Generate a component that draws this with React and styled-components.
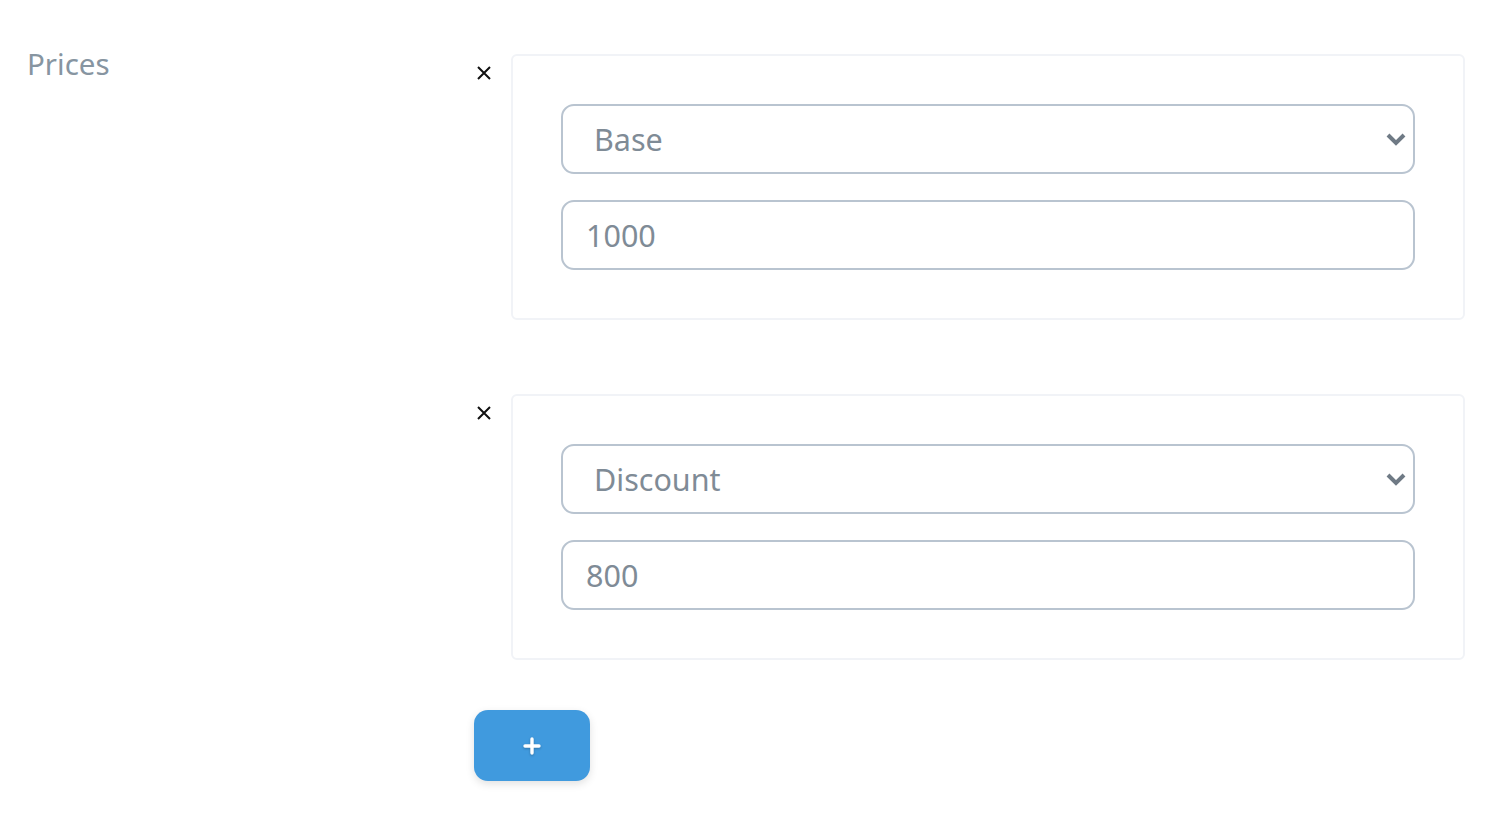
import React from 'react'
import styled, { createGlobalStyle } from 'styled-components'

const GlobalStyle = createGlobalStyle`
  html, body {
    margin: 0;
    padding: 0;
    background: #fff;
  }
  body {
    font-family: "Noto Sans", Lato, "Liberation Sans", sans-serif;
  }
`

const Page = styled.div`
  display: grid;
  grid-template-columns: 447px 1fr;
  padding: 46px 29px 40px 27px;
`

const Label = styled.div`
  font-size: 29.5px;
  color: #8795a1;
  line-height: 1;
  margin-top: 3px;
`

const Fields = styled.div`
  display: flex;
  flex-direction: column;
  margin-top: 8px;
`

const PriceRow = styled.div`
  display: flex;
  align-items: flex-start;
  & + & {
    margin-top: 74px;
  }
`

const Remove = styled.button`
  width: 37px;
  flex: none;
  padding: 11px 0 0 2px;
  margin: 0;
  border: none;
  background: none;
  display: flex;
  cursor: pointer;
`

const Card = styled.div`
  flex: 1;
  border: 2px solid #f1f3f7;
  border-radius: 6px;
  padding: 48px;
  display: flex;
  flex-direction: column;
  gap: 26px;
`

const SelectWrap = styled.div`
  position: relative;
`

const fieldCss = `
  width: 100%;
  box-sizing: border-box;
  height: 70px;
  border: 2px solid #b9c4d0;
  border-radius: 13px;
  background: #fff;
  font-family: inherit;
  font-size: 30.5px;
  color: #7f8b96;
  outline: none;
`

const Select = styled.select`
  ${fieldCss}
  appearance: none;
  padding: 0 60px 0 31px;
`

const Chevron = styled.svg`
  position: absolute;
  right: 7px;
  top: 50%;
  transform: translateY(-50%);
  pointer-events: none;
`

const Input = styled.input`
  ${fieldCss}
  padding: 0 23px;
`

const AddButton = styled.button`
  margin-top: 50px;
  width: 116px;
  height: 71px;
  border: none;
  border-radius: 14px;
  background: #409ade;
  box-shadow: 0 3px 8px rgba(0, 0, 0, 0.12);
  display: flex;
  align-items: center;
  justify-content: center;
  cursor: pointer;
`

const CloseIcon = () => (
  <svg width="16" height="16" viewBox="0 0 16 16">
    <path d="M2 2 L14 14 M14 2 L2 14" stroke="#111" strokeWidth="2" />
  </svg>
)

const PlusIcon = () => (
  <svg width="18" height="18" viewBox="0 0 18 18" style={{ filter: 'drop-shadow(0 1px 1px rgba(0,0,0,0.25))' }}>
    <path d="M9 2 V16 M2 9 H16" stroke="#fff" strokeWidth="3.4" strokeLinecap="round" />
  </svg>
)

const prices = [
  { type: 'Base', amount: '1000' },
  { type: 'Discount', amount: '800' },
]

const App = () => (
  <>
    <GlobalStyle />
    <Page>
      <Label>Prices</Label>
      <Fields>
        {prices.map(price => (
          <PriceRow key={price.type}>
            <Remove aria-label="remove">
              <CloseIcon />
            </Remove>
            <Card>
              <SelectWrap>
                <Select defaultValue={price.type}>
                  <option>Base</option>
                  <option>Discount</option>
                </Select>
                <Chevron width="24" height="16" viewBox="0 0 24 16">
                  <path d="M4 4 L12 12 L20 4" fill="none" stroke="#6f7a85" strokeWidth="4" />
                </Chevron>
              </SelectWrap>
              <Input defaultValue={price.amount} />
            </Card>
          </PriceRow>
        ))}
        <AddButton aria-label="add">
          <PlusIcon />
        </AddButton>
      </Fields>
    </Page>
  </>
)

export default App
